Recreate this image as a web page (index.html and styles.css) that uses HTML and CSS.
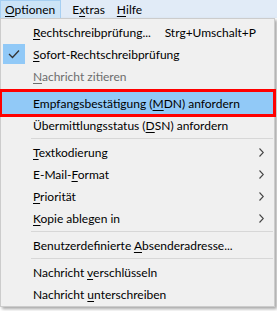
FILE: index.html
```html
<!DOCTYPE html>
<html lang="de">
<head>
<meta charset="utf-8">
<link rel="stylesheet" href="styles.css">
</head>
<body>
<div class="menubar">
  <span class="mb-item active"><u>O</u>ptionen</span>
  <span class="mb-item">E<u>x</u>tras</span>
  <span class="mb-item"><u>H</u>ilfe</span>
</div>
<div class="menu">
  <div class="row"><span class="ic"></span><span class="lbl"><u>R</u>echtschreibprüfung...</span><span class="sc">Strg+Umschalt+P</span></div>
  <div class="row"><span class="ic checked"><svg width="12" height="10" viewBox="0 0 12 10"><path d="M1 5 L4.5 8.5 L11 1.5" fill="none" stroke="#333" stroke-width="1.3"/></svg></span><span class="lbl"><u>S</u>ofort-Rechtschreibprüfung</span></div>
  <div class="row disabled"><span class="ic"></span><span class="lbl"><u>N</u>achricht zitieren</span></div>
  <div class="sep"></div>
  <div class="row hl"><span class="ic"></span><span class="lbl">Empfangsbestätigung (<u>M</u>DN) anfordern</span></div>
  <div class="row"><span class="ic"></span><span class="lbl">Übermittlungsstatus (<u>D</u>SN) anfordern</span></div>
  <div class="sep"></div>
  <div class="row"><span class="ic"></span><span class="lbl"><u>T</u>extkodierung</span><span class="arr"><svg width="5" height="9" viewBox="0 0 5 9"><path d="M0.5 0.5 L4.3 4.5 L0.5 8.5" fill="none" stroke="#444" stroke-width="1.1"/></svg></span></div>
  <div class="row"><span class="ic"></span><span class="lbl">E-Mail-<u>F</u>ormat</span><span class="arr"><svg width="5" height="9" viewBox="0 0 5 9"><path d="M0.5 0.5 L4.3 4.5 L0.5 8.5" fill="none" stroke="#444" stroke-width="1.1"/></svg></span></div>
  <div class="row"><span class="ic"></span><span class="lbl"><u>P</u>riorität</span><span class="arr"><svg width="5" height="9" viewBox="0 0 5 9"><path d="M0.5 0.5 L4.3 4.5 L0.5 8.5" fill="none" stroke="#444" stroke-width="1.1"/></svg></span></div>
  <div class="row"><span class="ic"></span><span class="lbl"><u>K</u>opie ablegen in</span><span class="arr"><svg width="5" height="9" viewBox="0 0 5 9"><path d="M0.5 0.5 L4.3 4.5 L0.5 8.5" fill="none" stroke="#444" stroke-width="1.1"/></svg></span></div>
  <div class="sep"></div>
  <div class="row"><span class="ic"></span><span class="lbl">Benutzerdefinierte <u>A</u>bsenderadresse...</span></div>
  <div class="sep"></div>
  <div class="row"><span class="ic"></span><span class="lbl">Nachricht <u>v</u>erschlüsseln</span></div>
  <div class="row"><span class="ic"></span><span class="lbl">Nachricht <u>u</u>nterschreiben</span></div>
</div>
</body>
</html>
```
FILE: styles.css
```css
html, body {
  margin: 0;
  padding: 0;
  background: #ffffff;
}
body {
  font-family: Lato, "Noto Sans", sans-serif;
  font-size: 12px;
  color: #000;
  width: 277px;
  height: 311px;
  overflow: hidden;
}
u {
  text-decoration: underline;
  text-underline-offset: 2px;
  text-decoration-thickness: 1px;
}
.menubar {
  display: flex;
  height: 18px;
  background: #e1ebf7;
  align-items: stretch;
}
.mb-item {
  display: flex;
  align-items: center;
  padding: 0 6px;
}
.mb-item.active {
  background: #cce4f7;
  border: 1px solid #a6cff2;
  border-bottom: none;
  padding: 0 5px 0 4px;
  margin-right: 5px;
}
.menu {
  width: 271px;
  background: #f0f0f0;
  border: 1px solid #cccccc;
  padding: 2px 1px 1px 1px;
  box-shadow: 2px 2px 3px rgba(0,0,0,0.35);
}
.row {
  display: flex;
  align-items: center;
  height: 22px;
  padding-right: 9px;
}
.ic {
  width: 22px;
  height: 20px;
  margin: 0 8px 0 1px;
  display: flex;
  align-items: center;
  justify-content: center;
  flex: none;
}
.ic.checked {
  background: #91c9f7;
}
.lbl {
  flex: 1;
  white-space: nowrap;
}
.sc {
  white-space: nowrap;
  margin-right: 8px;
}
.arr {
  display: flex;
  align-items: center;
}
.disabled {
  color: #6d6d6d;
}
.hl {
  background: #91c9f7;
  outline: 3px solid #ff0000;
  outline-offset: 0;
  position: relative;
}
.sep {
  height: 1px;
  background: #d7d7d7;
  margin: 2px 0 2px 29px;
}
```
